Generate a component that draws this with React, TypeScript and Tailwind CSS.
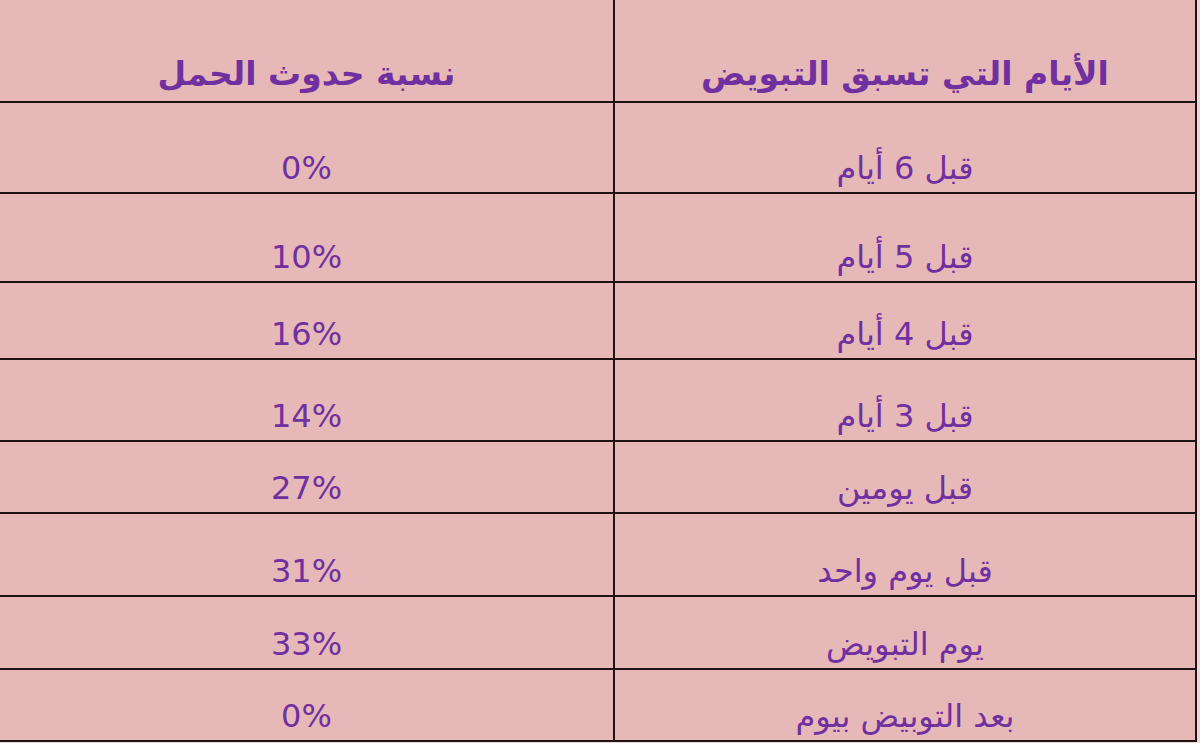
const rows = [
  { day: "قبل 6 أيام", rate: "0%", h: "h-[91px]" },
  { day: "قبل 5 أيام", rate: "10%", h: "h-[89px]" },
  { day: "قبل 4 أيام", rate: "16%", h: "h-[77px]" },
  { day: "قبل 3 أيام", rate: "14%", h: "h-[82px]" },
  { day: "قبل يومين", rate: "27%", h: "h-[72px]" },
  { day: "قبل يوم واحد", rate: "31%", h: "h-[83px]" },
  { day: "يوم التبويض", rate: "33%", h: "h-[73px]" },
  { day: "بعد التوبيض بيوم", rate: "0%", h: "h-[72px]" },
];

export default function App() {
  return (
    <div
      className="w-[1200px] h-[743px] overflow-hidden bg-[#f0d6d6] text-[#7030a0]"
      style={{ fontFamily: '"DejaVu Sans", "Liberation Sans", sans-serif' }}
    >
      <div className="w-[1197px] bg-[#e6b8b7]">
        {/* header */}
        <div className="flex h-[103px] border-b-2 border-[#1f1212]">
          <div className="w-[615px] border-r-2 border-[#1f1212] flex items-end justify-center pb-[7px]">
            <span dir="rtl" className="text-[33px] leading-[40px] font-bold">
              نسبة حدوث الحمل
            </span>
          </div>
          <div className="w-[582px] border-r-2 border-[#1f1212] flex items-end justify-center pb-[7px]">
            <span dir="rtl" className="text-[33px] leading-[40px] font-bold">
              الأيام التي تسبق التبويض
            </span>
          </div>
        </div>

        {rows.map((r, i) => (
          <div key={i} className={`flex ${r.h} border-b-2 border-[#1f1212]`}>
            <div className="w-[615px] border-r-2 border-[#1f1212] flex items-end justify-center pb-[6px]">
              <span className="text-[32px] leading-[36px]">{r.rate}</span>
            </div>
            <div className="w-[582px] border-r-2 border-[#1f1212] flex items-end justify-center pb-[6px]">
              <span dir="rtl" className="text-[32px] leading-[36px]">
                {r.day}
              </span>
            </div>
          </div>
        ))}
      </div>
    </div>
  );
}
